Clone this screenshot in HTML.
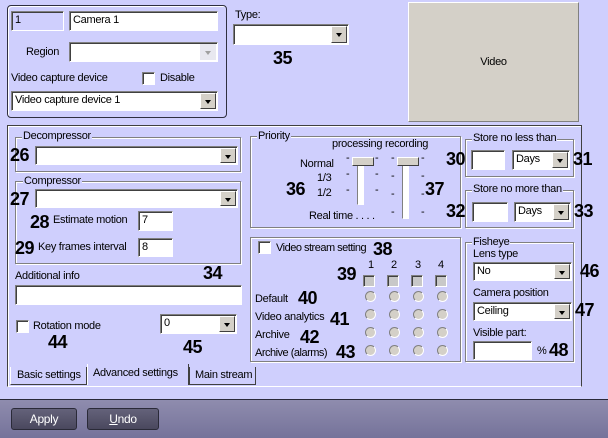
<!DOCTYPE html>
<html><head><meta charset="utf-8"><style>
*{box-sizing:border-box;margin:0;padding:0}
body{width:608px;height:438px;overflow:hidden;background:#cfcffd;font-family:"Liberation Sans",sans-serif;font-size:11px;letter-spacing:-0.3px;color:#000;position:relative}
.a{position:absolute;white-space:nowrap}
.in{position:absolute;background:#fff;border:1px solid;border-color:#808080 #fff #fff #808080;box-shadow:inset 1px 1px #404040;padding:2px 3px;line-height:13px}
.cb{position:absolute;background:#fff;border:1px solid;border-color:#808080 #fff #fff #808080;box-shadow:inset 1px 1px #404040;padding:2px 3px;line-height:13px}
.cb .btn{position:absolute;right:1px;top:1px;bottom:1px;width:16px;background:#d4d0c8;border:1px solid;border-color:#fff #404040 #404040 #fff}
.cb .btn:after{content:"";position:absolute;left:4px;top:6px;border-left:3.5px solid transparent;border-right:3.5px solid transparent;border-top:4px solid #000}
.cb.dis .btn{background:#e8e8f0;border-color:#e8e8f0}
.cb.dis .btn:after{border-top-color:#a0a0a0}
.g{position:absolute;border:1px solid #808080;box-shadow:inset 1px 1px #fff,1px 1px #fff}
.lg{position:absolute;background:#cfcffd;padding:0 1px;line-height:12px}
.n{position:absolute;font-weight:bold;font-size:18px;line-height:18px;letter-spacing:-0.5px;white-space:nowrap}
.chk{position:absolute;width:13px;height:13px;background:#fff;border:1px solid;border-color:#808080 #fff #fff #808080;box-shadow:inset 1px 1px #404040}
.sq{position:absolute;width:12px;height:12px;background:#c8c8c8;border:1px solid;border-color:#808080 #fff #fff #808080;box-shadow:inset 1px 1px #404040}
.rd{position:absolute;width:11px;height:11px;border-radius:50%;background:#d4d0c8;border:1px solid;border-color:#808080 #fff #fff #808080}
.thumb{position:absolute;width:22px;height:9px;background:#d4d0c8;border:1px solid;border-color:#fff #404040 #404040 #fff}
.trk{position:absolute;width:7px;background:#fff;border:1px solid;border-color:#808080 #fff #fff #808080}
.bt{position:absolute;height:22px;border:1px solid #2a2a38;border-radius:3px;background:linear-gradient(#64627a,#4a485e);color:#fff;text-align:center;line-height:20px;font-size:12px}
</style></head><body>

<div class="a" style="left:7px;top:5px;width:220px;height:113px;border:1px solid #303040;border-radius:4px;box-shadow:inset 1px 1px #fff"></div>
<div class="in" style="left:11px;top:11px;width:53px;height:20px;background:#cfcffd">1</div>
<div class="in" style="left:69px;top:11px;width:149px;height:20px">Camera 1</div>
<div class="a" style="left:26px;top:46px">Region</div>
<div class="cb dis" style="left:69px;top:42px;width:149px;height:20px;background:#fff"><div class="btn"></div></div>
<div class="a" style="left:11px;top:72px">Video capture device</div>
<div class="chk" style="left:142px;top:72px"></div>
<div class="a" style="left:160px;top:72px">Disable</div>
<div class="cb" style="left:11px;top:91px;width:207px;height:20px">Video capture device 1<div class="btn"></div></div>

<div class="a" style="left:235px;top:9px">Type:</div>
<div class="cb" style="left:233px;top:24px;width:116px;height:21px"><div class="btn"></div></div>
<div class="n" style="left:273px;top:49px">35</div>

<div class="a" style="left:408px;top:2px;width:171px;height:120px;background:#d4d0c8;border:1px solid;border-color:#fff #808080 #808080 #fff;text-align:center;line-height:118px">Video</div>

<div class="a" style="left:7px;top:125px;width:575px;height:262px;border:1px solid;border-color:#404040 #404040 #fff #404040;box-shadow:inset 1px 1px #fff"></div>

<div class="g" style="left:15px;top:137px;width:226px;height:35px"></div>
<div class="lg" style="left:22px;top:130px">Decompressor</div>
<div class="n" style="left:10px;top:146px">26</div>
<div class="cb" style="left:35px;top:146px;width:203px;height:19px"><div class="btn"></div></div>

<div class="g" style="left:15px;top:181px;width:226px;height:83px"></div>
<div class="lg" style="left:23px;top:175px">Compressor</div>
<div class="n" style="left:10px;top:190px">27</div>
<div class="cb" style="left:35px;top:189px;width:203px;height:19px"><div class="btn"></div></div>
<div class="n" style="left:30px;top:213px">28</div>
<div class="a" style="left:53px;top:214px">Estimate motion</div>
<div class="in" style="left:138px;top:211px;width:35px;height:20px">7</div>
<div class="n" style="left:15px;top:239px">29</div>
<div class="a" style="left:38px;top:241px">Key frames interval</div>
<div class="in" style="left:138px;top:238px;width:35px;height:19px">8</div>

<div class="a" style="left:15px;top:270px">Additional info</div>
<div class="n" style="left:203px;top:264px">34</div>
<div class="in" style="left:15px;top:285px;width:227px;height:20px"></div>
<div class="chk" style="left:16px;top:320px"></div>
<div class="a" style="left:33px;top:320px">Rotation mode</div>
<div class="n" style="left:48px;top:333px">44</div>
<div class="cb" style="left:160px;top:314px;width:77px;height:20px">0<div class="btn"></div></div>
<div class="n" style="left:183px;top:338px">45</div>

<div class="g" style="left:250px;top:136px;width:211px;height:92px"></div>
<div class="lg" style="left:257px;top:130px">Priority</div>
<div class="a" style="left:332px;top:138px">processing recording</div>
<div class="a" style="left:300px;top:158px">Normal</div>
<div class="a" style="left:317px;top:172px">1/3</div>
<div class="a" style="left:317px;top:187px">1/2</div>
<div class="n" style="left:286px;top:180px">36</div>
<div class="a" style="left:309px;top:210px">Real time . . . .</div>
<div class="a" style="left:346px;top:152px">-</div>
<div class="a" style="left:346px;top:168px">-</div>
<div class="a" style="left:346px;top:184px">-</div>
<div class="a" style="left:375px;top:152px">-</div>
<div class="a" style="left:375px;top:168px">-</div>
<div class="a" style="left:375px;top:184px">-</div>
<div class="a" style="left:391px;top:152px">-</div>
<div class="a" style="left:391px;top:170px">-</div>
<div class="a" style="left:391px;top:188px">-</div>
<div class="a" style="left:391px;top:206px">-</div>
<div class="a" style="left:421px;top:152px">-</div>
<div class="a" style="left:421px;top:170px">-</div>
<div class="a" style="left:421px;top:188px">-</div>
<div class="a" style="left:421px;top:206px">-</div>
<div class="trk" style="left:357px;top:162px;height:43px"></div>
<div class="trk" style="left:402px;top:162px;height:57px"></div>
<div class="thumb" style="left:352px;top:157px"></div>
<div class="thumb" style="left:397px;top:157px"></div>
<div class="n" style="left:425px;top:180px">37</div>

<div class="g" style="left:465px;top:139px;width:109px;height:38px"></div>
<div class="lg" style="left:472px;top:132px">Store no less than</div>
<div class="n" style="left:446px;top:150px">30</div>
<div class="in" style="left:471px;top:150px;width:34px;height:20px"></div>
<div class="cb" style="left:512px;top:150px;width:58px;height:20px">Days<div class="btn"></div></div>
<div class="n" style="left:573px;top:150px">31</div>
<div class="g" style="left:465px;top:190px;width:109px;height:38px"></div>
<div class="lg" style="left:472px;top:183px">Store no more than</div>
<div class="n" style="left:446px;top:202px">32</div>
<div class="in" style="left:472px;top:202px;width:36px;height:20px"></div>
<div class="cb" style="left:514px;top:202px;width:57px;height:20px">Days<div class="btn"></div></div>
<div class="n" style="left:574px;top:202px">33</div>

<div class="g" style="left:250px;top:237px;width:211px;height:125px"></div>
<div class="chk" style="left:258px;top:241px"></div>
<div class="a" style="left:276px;top:242px;letter-spacing:-0.5px">Video stream setting</div>
<div class="n" style="left:373px;top:240px">38</div>
<div class="a" style="left:368px;top:259px">1</div>
<div class="a" style="left:391px;top:259px">2</div>
<div class="a" style="left:415px;top:259px">3</div>
<div class="a" style="left:438px;top:259px">4</div>
<div class="n" style="left:337px;top:265px">39</div>
<div class="sq" style="left:363px;top:275px"></div>
<div class="sq" style="left:387px;top:275px"></div>
<div class="sq" style="left:411px;top:275px"></div>
<div class="sq" style="left:435px;top:275px"></div>
<div class="a" style="left:255px;top:293px">Default</div>
<div class="n" style="left:298px;top:289px">40</div>
<div class="a" style="left:255px;top:311px">Video analytics</div>
<div class="n" style="left:330px;top:310px">41</div>
<div class="a" style="left:255px;top:329px">Archive</div>
<div class="n" style="left:300px;top:328px">42</div>
<div class="a" style="left:255px;top:347px;letter-spacing:-0.5px">Archive (alarms)</div>
<div class="n" style="left:336px;top:343px">43</div>
<div class="rd" style="left:365px;top:291px"></div><div class="rd" style="left:389px;top:291px"></div><div class="rd" style="left:413px;top:291px"></div><div class="rd" style="left:437px;top:291px"></div>
<div class="rd" style="left:365px;top:309px"></div><div class="rd" style="left:389px;top:309px"></div><div class="rd" style="left:413px;top:309px"></div><div class="rd" style="left:437px;top:309px"></div>
<div class="rd" style="left:365px;top:327px"></div><div class="rd" style="left:389px;top:327px"></div><div class="rd" style="left:413px;top:327px"></div><div class="rd" style="left:437px;top:327px"></div>
<div class="rd" style="left:365px;top:345px"></div><div class="rd" style="left:389px;top:345px"></div><div class="rd" style="left:413px;top:345px"></div><div class="rd" style="left:437px;top:345px"></div>

<div class="g" style="left:465px;top:242px;width:109px;height:120px"></div>
<div class="lg" style="left:472px;top:236px">Fisheye</div>
<div class="a" style="left:473px;top:248px">Lens type</div>
<div class="cb" style="left:473px;top:262px;width:99px;height:19px">No<div class="btn"></div></div>
<div class="n" style="left:580px;top:262px">46</div>
<div class="a" style="left:473px;top:287px">Camera position</div>
<div class="cb" style="left:473px;top:302px;width:99px;height:19px">Ceiling<div class="btn"></div></div>
<div class="n" style="left:575px;top:301px">47</div>
<div class="a" style="left:473px;top:327px">Visible part:</div>
<div class="in" style="left:473px;top:341px;width:59px;height:19px"></div>
<div class="a" style="left:537px;top:345px">%</div>
<div class="n" style="left:549px;top:341px">48</div>

<div class="a" style="left:10px;top:367px;width:77px;height:18px;border:1px solid;border-color:#fff #404040 #404040 #fff;border-top:none;padding:2px 0 0 6px">Basic settings</div>
<div class="a" style="left:87px;top:364px;width:102px;height:21px;background:#cfcffd;border-left:1px solid #fff;border-right:1px solid #404040;padding:3px 0 0 5px">Advanced settings</div>
<div class="a" style="left:189px;top:367px;width:67px;height:18px;border:1px solid;border-color:#fff #404040 #404040 #404040;border-top:none;padding:2px 0 0 5px">Main stream</div>

<div class="a" style="left:0;top:399px;width:608px;height:39px;border-top:1px solid #2a2a3a;background:linear-gradient(#8f8cae,#75739a)"></div>
<div class="bt" style="left:11px;top:408px;width:66px">Apply</div>
<div class="bt" style="left:87px;top:408px;width:72px"><u>U</u>ndo</div>
</body></html>
